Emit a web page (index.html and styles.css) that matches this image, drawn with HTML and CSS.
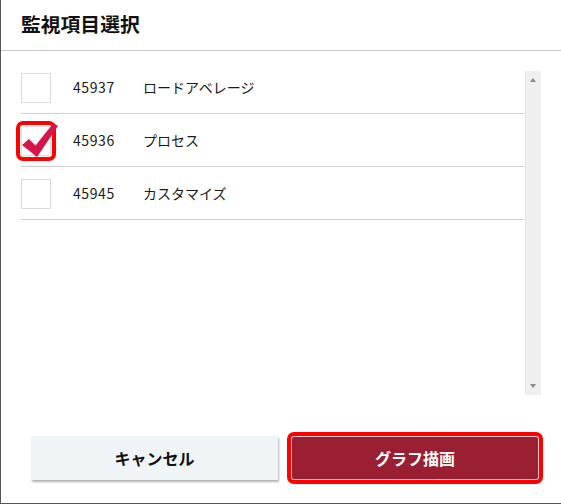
FILE: index.html
```html
<!DOCTYPE html>
<html lang="ja">
<head>
<meta charset="utf-8">
<link rel="stylesheet" href="styles.css">
</head>
<body>
<div class="dialog">
  <div class="header"><h1 class="title">監視項目選択</h1></div>
  <div class="content">
    <div class="list">
      <div class="row">
        <span class="box"></span>
        <span class="id">45937</span>
        <span class="name">ロードアベレージ</span>
      </div>
      <div class="row">
        <span class="box checked">
          <svg class="check" width="40" height="40" viewBox="0 0 40 40"><path d="M0 18 L7 12 L13.5 18.5 L31.5 -4 L36 -1 L15 30 Z" fill="#d7154b"/></svg>
        </span>
        <span class="id">45936</span>
        <span class="name">プロセス</span>
      </div>
      <div class="row">
        <span class="box"></span>
        <span class="id">45945</span>
        <span class="name">カスタマイズ</span>
      </div>
    </div>
    <div class="scrollbar">
      <span class="arrow up"></span>
      <span class="arrow down"></span>
    </div>
  </div>
  <div class="footer">
    <button class="btn cancel">キャンセル</button>
    <button class="btn primary">グラフ描画</button>
  </div>
</div>
</body>
</html>
```

FILE: styles.css
```css
html, body {
  margin: 0;
  padding: 0;
  background: #fff;
}
.dialog {
  width: 561px;
  height: 504px;
  box-sizing: border-box;
  border-left: 1px solid #555;
  border-bottom: 1px solid #555;
  font-family: "Noto Sans CJK JP", "Noto Sans", sans-serif;
  color: #222;
  display: flex;
  flex-direction: column;
}
.header {
  height: 51px;
  box-sizing: border-box;
  border-bottom: 1px solid #c8c8c8;
  display: flex;
  align-items: center;
  padding-left: 20px;
}
.title {
  margin: 0;
  font-size: 19.8px;
  font-weight: bold;
  color: #111;
  line-height: 1;
  padding-bottom: 2px;
}
.content {
  display: flex;
  padding: 10px 0 0 20px;
}
.list {
  width: 503px;
}
.row {
  display: flex;
  align-items: center;
  height: 53px;
  box-sizing: border-box;
  border-bottom: 1px solid #cfcfcf;
  padding-top: 1px;
  font-size: 14px;
  color: #1a1a1a;
}
.row .id, .row .name {
  position: relative;
  top: -1px;
}
.box {
  position: relative;
  width: 30px;
  height: 30px;
  box-sizing: border-box;
  border: 1px solid #dcdcdc;
  flex: none;
}
.box.checked {
  outline: 4px solid #f00;
  outline-offset: 1px;
  border-radius: 2px;
}
.check {
  position: absolute;
  left: 0;
  top: 0;
  overflow: visible;
}
.id {
  margin-left: 22px;
  width: 70px;
  letter-spacing: 0.6px;
}
.name {
  letter-spacing: 0;
}
.scrollbar {
  position: relative;
  margin-top: 10px;
  margin-left: 1px;
  width: 16px;
  height: 324px;
  background: #efefef;
  border-left: 1px solid #e6e6e6;
  box-sizing: border-box;
}
.arrow {
  position: absolute;
  left: 4px;
  width: 0;
  height: 0;
  border-left: 3.5px solid transparent;
  border-right: 3.5px solid transparent;
}
.arrow.up {
  top: 7px;
  border-bottom: 4px solid #8a8a8a;
}
.arrow.down {
  bottom: 7px;
  border-top: 4px solid #8a8a8a;
}
.footer {
  display: flex;
  gap: 13px;
  padding: 41px 0 0 30px;
}
.btn {
  width: 247px;
  height: 44px;
  box-sizing: border-box;
  font-family: "Noto Sans CJK JP", "Noto Sans", sans-serif;
  font-size: 16px;
  font-weight: bold;
  cursor: pointer;
  padding: 0;
}
.cancel {
  background: #eff4f7;
  border: none;
  color: #111;
  box-shadow: 1px 2px 2px rgba(0, 0, 0, 0.3);
}
.primary {
  width: 248px;
  background: #9a1f33;
  color: #fff;
  border: 1px solid #e0c8cc;
  outline: 4px solid #f00;
  outline-offset: 0;
  border-radius: 3px;
}
```
